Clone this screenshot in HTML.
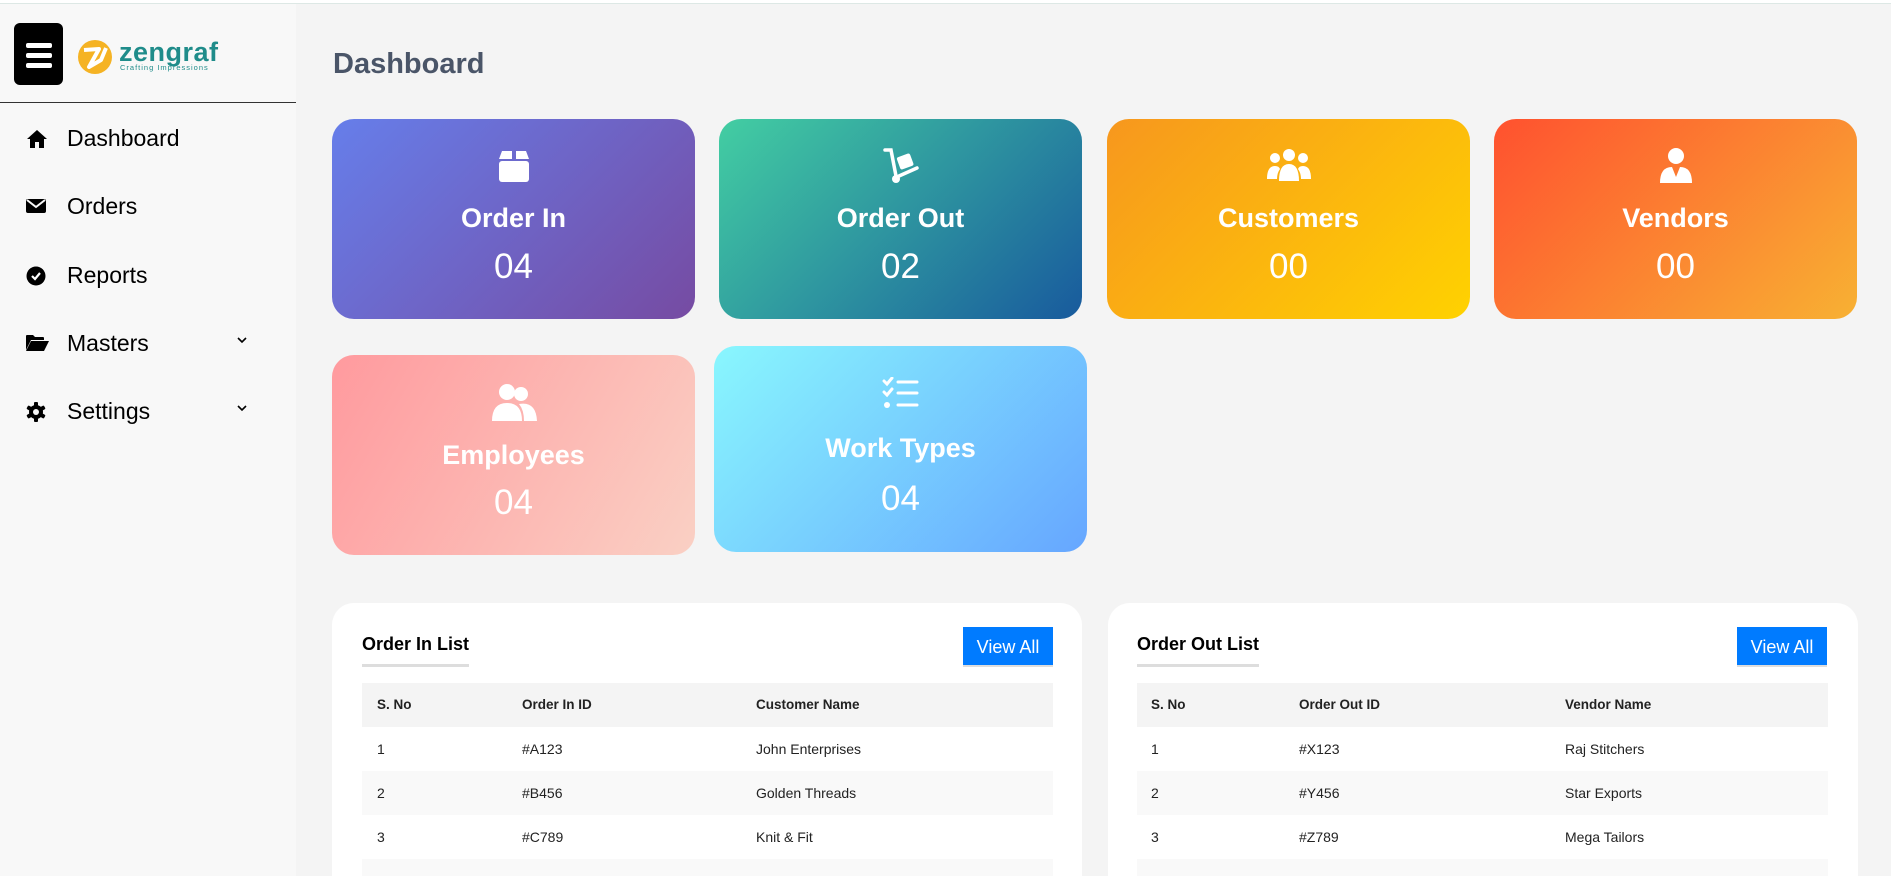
<!DOCTYPE html>
<html style="overflow:hidden;width:1891px;height:876px"><head><meta charset="utf-8"><style>
*{margin:0;padding:0;box-sizing:border-box}
body{width:1891px;height:876px;overflow:hidden;background:#f4f4f4;font-family:"Liberation Sans",sans-serif;position:relative}
.topline{position:absolute;left:0;top:0;width:1891px;height:4px;border-bottom:1px solid #dde8e5;background:#fff}
.side{position:absolute;left:0;top:4px;width:296px;height:872px;background:#f8f8f8}
.ham{position:absolute;left:14px;top:23px;width:49px;height:62px;background:#000;border-radius:6px}
.ham i{position:absolute;left:12px;width:26px;height:5px;background:#fff;border-radius:2px}
.div{position:absolute;left:0;top:102px;width:296px;height:1px;background:#333}
.mi{position:absolute;left:0;height:40px;width:296px;font-size:23px;color:#000}
.mi span{position:absolute;left:67px;top:7px}
.mi svg{position:absolute;left:26px;top:11px}
.mi .chev{position:absolute;left:236px;top:12px}
h1{position:absolute;left:333px;top:48px;font-size:29px;color:#4a5568;font-weight:bold}
.card{position:absolute;border-radius:22px;color:#fff;text-align:center}
.card .ic{position:absolute;left:0;width:100%;display:flex;justify-content:center}
.card .t{position:absolute;left:0;width:100%;font-size:27px;font-weight:bold}
.card .n{position:absolute;left:0;width:100%;font-size:35px}
.panel{position:absolute;top:603px;width:750px;height:273px;background:#fff;border-radius:22px 22px 0 0;overflow:hidden}
.ptitle{position:absolute;top:634px;font-size:18px;font-weight:bold;color:#000;padding-bottom:9px;border-bottom:3px solid #ddd}
.btn{position:absolute;top:627px;width:90px;height:40px;background:#007bff;color:#fff;font-size:18px;text-align:center;line-height:40px;border-bottom:2px solid #ddd}
.tbl{position:absolute;top:683px;width:691px;height:193px;overflow:hidden;font-size:14px;color:#222}
.tbl div.r{height:44px;position:relative}
.tbl div.r span{position:absolute;top:14px}
.tbl .h{background:#f4f4f4;font-weight:bold;font-size:13.5px}
.tbl .z{background:#f9f9f9}
</style></head><body>
<div class="topline"></div>
<div class="side"></div>
<div class="ham"><i style="top:20px"></i><i style="top:30px"></i><i style="top:40px"></i></div>
<svg style="position:absolute;left:77px;top:39px" width="36" height="36" viewBox="0 0 36 36"><circle cx="18" cy="18" r="17" fill="#f5b324"/><path d="M7 11 L22 10 L12 28 L24 21 L29 9" stroke="#fff" stroke-width="4" fill="none" stroke-linejoin="round"/></svg>
<div style="position:absolute;left:119px;top:37px;font-size:27px;font-weight:bold;color:#1f8c8a;letter-spacing:0.5px">zengraf</div>
<div style="position:absolute;left:120px;top:63px;font-size:7.5px;color:#1f8c8a;letter-spacing:1px">Crafting Impressions</div>
<div class="div"></div>
<div class="mi" style="top:118px"><svg width="22" height="20" viewBox="0 0 22 20"><path d="M11 1 L1 10 H4 V19 H9 V13 H13 V19 H18 V10 H21 Z" fill="#000"/></svg><span>Dashboard</span></div>
<div class="mi" style="top:186px"><svg width="20" height="18" viewBox="0 0 20 18"><rect x="0" y="2" width="20" height="14" rx="2" fill="#000"/><path d="M1 3 L10 10 L19 3" stroke="#f8f8f8" stroke-width="2" fill="none"/></svg><span>Orders</span></div>
<div class="mi" style="top:255px"><svg width="20" height="20" viewBox="0 0 20 20"><circle cx="10" cy="10" r="9.5" fill="#000"/><path d="M6 10 L9 13 L14 7" stroke="#fff" stroke-width="2.2" fill="none"/></svg><span>Reports</span></div>
<div class="mi" style="top:323px"><svg width="23" height="18" viewBox="0 0 23 18"><path d="M0 2 Q0 1 1 1 H7 L9 3 H17 Q18 3 18 4 V6 H5 L0 16 Z M5 7 H23 L18 17 H0 Z" fill="#000"/></svg><span>Masters</span><svg class="chev" width="12" height="10" viewBox="0 0 12 10"><path d="M2 3 L6 7 L10 3" stroke="#000" stroke-width="1.6" fill="none"/></svg></div>
<div class="mi" style="top:391px"><svg width="20" height="20" viewBox="0 0 20 20"><g fill="#000"><circle cx="10" cy="10" r="7"/><rect x="8" y="0" width="4" height="20" rx="1"/><rect x="8" y="0" width="4" height="20" rx="1" transform="rotate(60 10 10)"/><rect x="8" y="0" width="4" height="20" rx="1" transform="rotate(120 10 10)"/></g><circle cx="10" cy="10" r="3" fill="#f8f8f8"/></svg><span>Settings</span><svg class="chev" width="12" height="10" viewBox="0 0 12 10"><path d="M2 3 L6 7 L10 3" stroke="#000" stroke-width="1.6" fill="none"/></svg></div>

<h1>Dashboard</h1>

<div class="card" style="left:332px;top:119px;width:363px;height:200px;background:linear-gradient(135deg,#667eea,#764ba2)">
<div class="ic" style="top:30px"><svg width="32" height="34" viewBox="0 0 32 34"><path d="M4 2 H14 V10 H1 Z M18 2 H28 L31 10 H18 Z" fill="#fff"/><rect x="1" y="12" width="30" height="21" rx="3" fill="#fff"/></svg></div>
<div class="t" style="top:84px">Order In</div><div class="n" style="top:128px">04</div></div>
<div class="card" style="left:719px;top:119px;width:363px;height:200px;background:linear-gradient(135deg,#43cea2,#185a9d)">
<div class="ic" style="top:27px"><svg width="40" height="40" viewBox="0 0 40 40"><path d="M4 4 H10 L15 30" stroke="#fff" stroke-width="3.5" fill="none" stroke-linecap="round"/><circle cx="15" cy="33" r="4" fill="#fff"/><path d="M18 30 L36 22" stroke="#fff" stroke-width="3.5" stroke-linecap="round"/><rect x="17" y="9" width="14" height="13" rx="2" fill="#fff" transform="rotate(-20 24 15)"/></svg></div>
<div class="t" style="top:84px">Order Out</div><div class="n" style="top:128px">02</div></div>
<div class="card" style="left:1107px;top:119px;width:363px;height:200px;background:linear-gradient(135deg,#f7971e,#ffd200)">
<div class="ic" style="top:28px"><svg width="46" height="36" viewBox="0 0 46 36"><g fill="#fff"><circle cx="23" cy="8" r="6"/><circle cx="9" cy="11" r="5"/><circle cx="37" cy="11" r="5"/><path d="M13 34 Q13 17 23 17 Q33 17 33 34 Z"/><path d="M1 32 Q1 19 9 19 Q13 19 14 22 Q11 26 11 32 Z"/><path d="M45 32 Q45 19 37 19 Q33 19 32 22 Q35 26 35 32 Z"/></g></svg></div>
<div class="t" style="top:84px">Customers</div><div class="n" style="top:128px">00</div></div>
<div class="card" style="left:1494px;top:119px;width:363px;height:200px;background:linear-gradient(135deg,#ff512f,#f8b133)">
<div class="ic" style="top:28px"><svg width="34" height="36" viewBox="0 0 34 36"><g fill="#fff"><circle cx="17" cy="9" r="8"/><path d="M1 36 Q1 20 13 20 L17 30 L21 20 Q33 20 33 36 Z"/></g></svg></div>
<div class="t" style="top:84px">Vendors</div><div class="n" style="top:128px">00</div></div>

<div class="card" style="left:332px;top:355px;width:363px;height:200px;background:linear-gradient(120deg,#ff9a9e,#fad0c4)">
<div class="ic" style="top:28px"><svg width="46" height="38" viewBox="0 0 46 38"><g fill="#fff"><circle cx="16" cy="9" r="8"/><circle cx="30" cy="11" r="7"/><path d="M1 38 Q1 20 16 20 Q31 20 31 38 Z"/><path d="M33 38 Q33 27 28 21 Q45 18 46 38 Z"/></g></svg></div>
<div class="t" style="top:85px">Employees</div><div class="n" style="top:128px">04</div></div>
<div class="card" style="left:714px;top:346px;width:373px;height:206px;background:linear-gradient(135deg,#89f7fe,#66a6ff)">
<div class="ic" style="top:31px"><svg width="38" height="32" viewBox="0 0 38 32"><g stroke="#fff" fill="none" stroke-width="3" stroke-linecap="round"><path d="M2 4 L5 7 L10 1"/><path d="M2 15 L5 18 L10 12"/><path d="M16 5 H35"/><path d="M16 16 H35"/><path d="M16 28 H35"/></g><circle cx="5" cy="28" r="3" fill="#fff"/></svg></div>
<div class="t" style="top:87px">Work Types</div><div class="n" style="top:133px">04</div></div>

<div class="panel" style="left:332px"></div>
<div class="ptitle" style="left:362px">Order In List</div>
<div class="btn" style="left:963px">View All</div>
<div class="tbl" style="left:362px">
<div class="r h"><span style="left:15px">S. No</span><span style="left:160px">Order In ID</span><span style="left:394px">Customer Name</span></div>
<div class="r"><span style="left:15px">1</span><span style="left:160px">#A123</span><span style="left:394px">John Enterprises</span></div>
<div class="r z"><span style="left:15px">2</span><span style="left:160px">#B456</span><span style="left:394px">Golden Threads</span></div>
<div class="r"><span style="left:15px">3</span><span style="left:160px">#C789</span><span style="left:394px">Knit &amp; Fit</span></div>
<div class="r z"></div>
</div>

<div class="panel" style="left:1108px"></div>
<div class="ptitle" style="left:1137px">Order Out List</div>
<div class="btn" style="left:1737px">View All</div>
<div class="tbl" style="left:1137px">
<div class="r h"><span style="left:14px">S. No</span><span style="left:162px">Order Out ID</span><span style="left:428px">Vendor Name</span></div>
<div class="r"><span style="left:14px">1</span><span style="left:162px">#X123</span><span style="left:428px">Raj Stitchers</span></div>
<div class="r z"><span style="left:14px">2</span><span style="left:162px">#Y456</span><span style="left:428px">Star Exports</span></div>
<div class="r"><span style="left:14px">3</span><span style="left:162px">#Z789</span><span style="left:428px">Mega Tailors</span></div>
<div class="r z"></div>
</div>
</body></html>
